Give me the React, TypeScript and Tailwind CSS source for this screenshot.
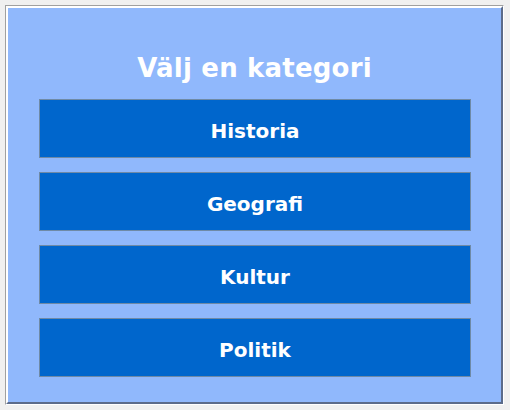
const categories = ["Historia", "Geografi", "Kultur", "Politik"];

export default function App() {
  return (
    <div
      className="min-h-[410px] w-[510px] bg-[#f0f0f0] p-[5px]"
      style={{ fontFamily: '"Comic Sans MS", "DejaVu Sans", sans-serif' }}
    >
      <div className="h-[400px] w-[499px] border border-t-[#a0a0a0] border-l-[#a0a0a0] border-r-white border-b-white">
        <div className="flex h-full flex-col border-2 border-t-white border-l-white border-r-[#5b6b8a] border-b-[#5b6b8a] bg-[#90b8fc]">
          <div className="flex h-[91px] items-end justify-center pb-[18px]">
            <h1 className="text-[26px] font-bold leading-none tracking-[0.2px] text-white">
              Välj en kategori
            </h1>
          </div>
          <div className="flex flex-col gap-[14px] pl-[31px]">
            {categories.map((c) => (
              <button
                key={c}
                type="button"
                className="flex h-[59px] w-[432px] items-center justify-center border border-[#6f8aa6] bg-[#0066cc] pt-[4px] text-[20px] font-bold text-white"
              >
                {c}
              </button>
            ))}
          </div>
        </div>
      </div>
    </div>
  );
}
